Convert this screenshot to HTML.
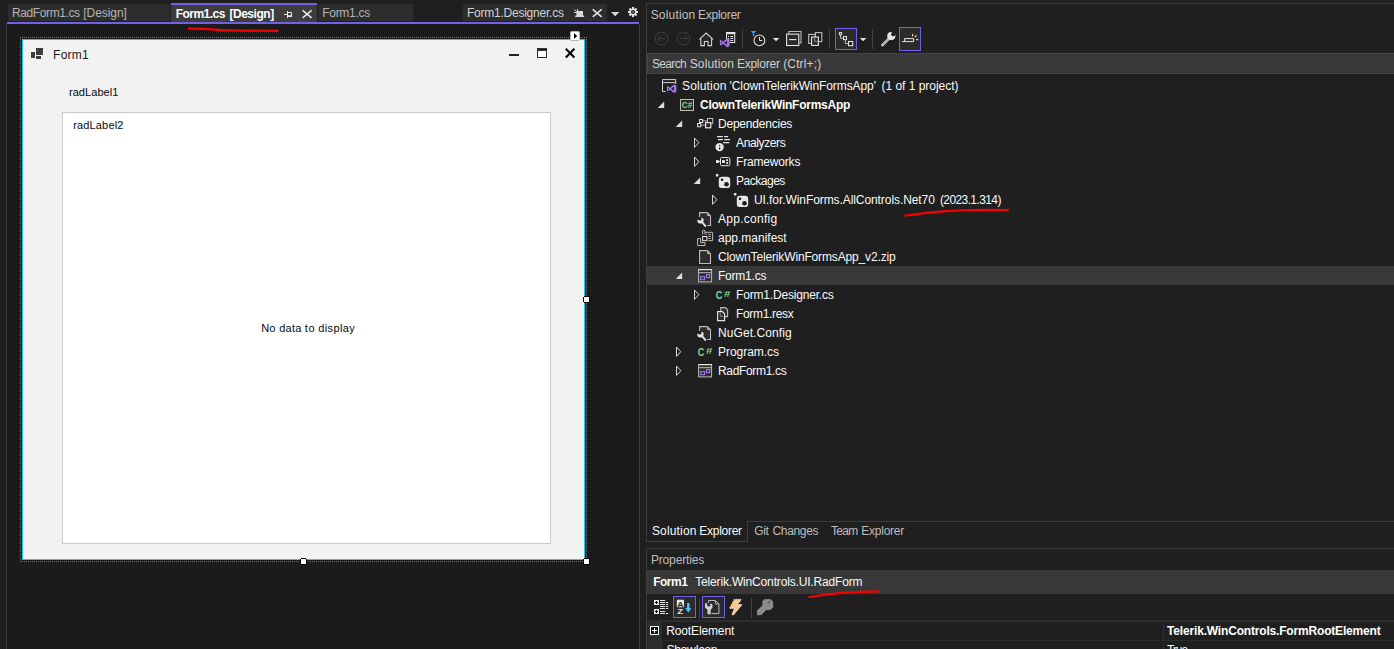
<!DOCTYPE html>
<html lang="en">
<head>
<meta charset="utf-8">
<title>Form1.cs [Design]</title>
<style>
html,body{margin:0;padding:0;}
body{width:1394px;height:649px;overflow:hidden;background:#1f1f1f;position:relative;font-family:"Liberation Sans",sans-serif;font-size:12px;}
.a{position:absolute;display:block;}
.t{position:absolute;display:block;white-space:pre;line-height:16px;height:16px;}
svg{position:absolute;display:block;overflow:visible;}
#left{left:0;top:0;width:640px;height:649px;background:#1f1f1f;}
#surface{left:6px;top:24px;width:634px;height:625px;background:#1b1b1b;border-left:1px solid #3d3d3d;border-right:1px solid #3d3d3d;box-sizing:border-box;}
.tab{top:4px;height:17px;background:#2d2d2d;}
#purple{left:7px;top:22px;width:632px;height:2px;background:#7160e8;}
#form{left:22px;top:39px;width:563px;height:521px;box-sizing:border-box;border:1px solid #10d2ff;background:#f2f2f2;}
#grid{left:62px;top:112px;width:489px;height:432px;box-sizing:border-box;border:1px solid #cacaca;background:#fff;}
.h{width:5px;height:5px;background:#fff;border:1px solid #000;clip-path:polygon(1px 0,6px 0,6px 1px,7px 1px,7px 6px,6px 6px,6px 7px,1px 7px,1px 6px,0 6px,0 1px,1px 1px);}
#gap{left:640px;top:0;width:6px;height:649px;background:#1f1f1f;}
#se{left:646px;top:3px;width:760px;height:519px;box-sizing:border-box;border:1px solid #3d3d3d;background:#1f1f1f;}
#searchbox{left:647px;top:53px;width:760px;height:21px;box-sizing:border-box;border:1px solid #464646;background:#383838;}
#sel{left:647px;top:266px;width:747px;height:19px;background:#383838;}
#pp{left:646px;top:548px;width:760px;height:120px;box-sizing:border-box;border:1px solid #3d3d3d;background:#1f1f1f;}
#objsel{left:647px;top:570px;width:747px;height:24px;background:#383838;}
.sep{width:1px;background:#424242;}
.hl{box-sizing:border-box;border:1px solid #7160e8;background:#1f1f1f;}
</style>
</head>
<body>
<div class="a" id="left"></div>
<div class="a" id="surface"></div>
<div class="a tab" style="left:8px;width:162px;"></div>
<div class="a tab" style="left:171px;width:146px;top:3px;height:19px;background:#3d3d3d;border-top:2px solid #7160e8;box-sizing:border-box;"></div>
<div class="a tab" style="left:318px;width:95px;"></div>
<div class="a tab" style="left:463px;width:144px;"></div>
<div class="a" id="purple"></div>
<!-- designer -->
<div class="a" style="left:20px;top:37px;width:567px;height:525px;box-sizing:border-box;border:1px dotted #727272;"></div>
<div class="a" id="form"></div>
<div class="a" id="grid"></div>
<div class="a h" style="left:583px;top:296px;"></div>
<div class="a h" style="left:300px;top:558px;"></div>
<div class="a h" style="left:583px;top:558px;"></div>
<svg class="a" style="left:0;top:0;" width="646" height="649" viewBox="0 0 646 649">
<!-- active tab pin -->
<g fill="none" stroke="#e8e8e8" stroke-width="1">
<path d="M284 14.5H287.5M287.5 11V18M287.5 12.5H291.5V16.5H287.5"/>
<path d="M288 16H292" stroke-width="1.6"/>
<path d="M302.6 10.3L311.6 17.8M311.6 10.3L302.6 17.8" stroke-width="1.5"/>
</g>
<!-- tab4 preview pin + close -->
<g fill="none" stroke="#d0d0d0" stroke-width="1">
<path d="M592.7 9.3L601.7 16.8M601.7 9.3L592.7 16.8" stroke-width="1.5" stroke="#e0e0e0"/>
<path d="M574.3 9.4L576.2 11.4M577.6 9V11M574 12.4H577" stroke="#d0d0d0"/>
<path d="M576.4 10.9H583V15.6H584.2V17H575.2V15.6H576.4Z" fill="#d8d8d8" stroke="none"/>
</g>
<path d="M611 12H619.4L615.2 16.2Z" fill="#d6d6d6"/>
<!-- gear -->
<g transform="translate(633 12)">
<g stroke="#e4e4e4" stroke-width="2">
<path d="M0 -5V5M-5 0H5M-3.55 -3.55L3.55 3.55M-3.55 3.55L3.55 -3.55"/>
</g>
<circle r="3.5" fill="#e4e4e4"/>
<circle r="2.1" fill="#1f1f1f"/>
<circle r="0.9" fill="#7a7a7a"/>
</g>
<!-- red underline -->
<path d="M188.8 28.7C200 28.6 205 28.8 215 29.6S240 30.8 277.4 30.8" fill="none" stroke="#f80000" stroke-width="2.3" stroke-linecap="round"/>
<!-- smart tag -->
<rect x="570.5" y="31.5" width="9" height="9" rx="1.2" fill="#ffffff" stroke="#b9b4a8" stroke-width="1"/>
<path d="M574 33V39L577.2 36Z" fill="#000"/>
<!-- form icon -->
<g fill="#3d3d3d" stroke="#ffffff" stroke-width="1" paint-order="stroke">
<rect x="36" y="48" width="7" height="7"/>
<rect x="31" y="52" width="4" height="6"/>
<rect x="36" y="56" width="5" height="3"/>
</g>
<!-- window buttons -->
<rect x="509" y="54" width="10" height="2" fill="#222"/>
<rect x="537.5" y="48.5" width="9" height="9" fill="#fff" stroke="#2a2a3a" stroke-width="1"/>
<rect x="537" y="48" width="10" height="3" fill="#2a2a2a"/>
<path d="M565.8 48.8L574.4 57.4M574.4 48.8L565.8 57.4" stroke="#000" stroke-width="2.1" fill="none"/>
</svg>

<!-- right -->
<div class="a" id="gap"></div>
<div class="a" id="se"></div>
<div class="a" id="searchbox"></div>
<div class="a" id="sel"></div>
<!-- bottom tab strip of solution explorer -->
<div class="a" style="left:646px;top:521px;width:748px;height:27px;background:#1f1f1f;"></div>
<div class="a" style="left:747px;top:521px;width:647px;height:1px;background:#3d3d3d;"></div>
<div class="a" style="left:646px;top:521px;width:102px;height:21px;box-sizing:border-box;border:1px solid #3d3d3d;border-top:none;background:#1f1f1f;"></div>
<div class="a" id="pp"></div>
<div class="a" id="objsel"></div>
<!-- property grid -->
<div class="a" style="left:647px;top:620px;width:747px;height:29px;background:#2d2d2d;"></div>
<div class="a" style="left:662px;top:622px;width:501px;height:18px;background:#1f1f1f;"></div>
<div class="a" style="left:1164px;top:622px;width:230px;height:18px;background:#1f1f1f;"></div>
<div class="a" style="left:662px;top:641px;width:501px;height:18px;background:#1f1f1f;"></div>
<div class="a" style="left:1164px;top:641px;width:230px;height:18px;background:#1f1f1f;"></div>
<svg class="a" style="left:646px;top:0;" width="748" height="649" viewBox="646 0 748 649">
<g fill="none" stroke="#3f3f3f" stroke-width="1"><circle cx="661.6" cy="38.5" r="6.4"/><path d="M665.0 38.5H658.2M661.0 35.5L658.0 38.5L661.0 41.5"/></g>
<g fill="none" stroke="#3f3f3f" stroke-width="1"><circle cx="683.5" cy="38.5" r="6.4"/><path d="M680.1 38.5H686.9M684.1 35.5L687.1 38.5L684.1 41.5"/></g>
<path d="M699.4 39.4L706.2 33L713 39.4M700.8 38.6V45.6H704.4V41.4H708V45.6H711.6V38.6" fill="#2b2b2b" stroke="#d4d4d4" stroke-width="1.05"/>
<g><rect x="726.5" y="32.5" width="8.2" height="10" fill="#1f1f1f" stroke="#e6e6e6" stroke-width="1"/><rect x="726" y="32" width="9.2" height="2.2" fill="#e6e6e6"/><path d="M728 36.5H729M730.4 36.5H733.2M728 38.5H729M730.4 38.5H733.2M730.4 40.5H733.2" stroke="#e6e6e6" stroke-width="1" fill="none"/></g>
<rect x="724" y="39" width="5.6" height="8" fill="#1f1f1f"/>
<path transform="translate(719.9 38.2) scale(1.04)" d="M6.9 0L9.3 1V7.6L6.9 8.6L3.1 5.3L1 6.9L0 6.4V2.2L1 1.7L3.1 3.3Z M1.1 3.2V5.4L2.2 4.3Z M4.2 4.3L6.9 6.4V2.2Z" fill="#a575e8" fill-rule="evenodd"/>
<path d="M742.5 29V49" stroke="#424242" stroke-width="1"/>
<path d="M829.5 29V49" stroke="#424242" stroke-width="1"/>
<path d="M872.5 29V49" stroke="#424242" stroke-width="1"/>
<path d="M750.8 31H756.2L754.2 33.3V36.2H752.8V33.3Z" fill="#3b9cff"/>
<g fill="none" stroke="#e6e6e6" stroke-width="1.1"><circle cx="759.4" cy="40.4" r="5.4"/><path d="M759.5 37V40.5H762.3" stroke-width="1"/></g>
<path d="M772.8 37.9H779.3L776.05 41.3Z" fill="#e6e6e6"/>
<path d="M859.9 37.9H866.4L863.15 41.3Z" fill="#e6e6e6"/>
<g fill="none" stroke="#e6e6e6" stroke-width="1.1"><path d="M788.9 33.8V31.5H801V43H799.3" stroke="#bdbdbd"/><rect x="786.6" y="34.1" width="12.2" height="11.4" fill="#2a2a2a"/><path d="M789.2 39.6H796.4"/></g>
<g fill="none" stroke-width="1.1"><rect x="808.7" y="34.4" width="6.6" height="9" stroke="#bdbdbd"/><rect x="815.4" y="32.6" width="6.4" height="9" stroke="#bdbdbd"/><rect x="811.6" y="37" width="6.8" height="8.4" fill="#2a2a2a" stroke="#e6e6e6"/><path d="M814.6 38V41.3H817.6" stroke="#8a8a8a" stroke-width="1"/></g>
<rect x="835.5" y="28.5" width="21" height="21" fill="#2b2b2b" stroke="#7160e8" stroke-width="1"/>
<g fill="none" stroke="#e6e6e6" stroke-width="1"><rect x="839.4" y="32.6" width="2.2" height="2.2"/><rect x="843.5" y="36.6" width="3" height="3"/><rect x="848.5" y="41.5" width="4.2" height="4.2"/><path d="M840.5 35V38.2H843.4M845.3 39.7V43.6H848.4" stroke="#bdbdbd"/></g>
<g><path d="M882.4 45.1L889.4 38.1" stroke="#dcdcdc" stroke-width="2.7" stroke-linecap="round" fill="none"/><path d="M882.6 44.9L888.2 39.3" stroke="#1f1f1f" stroke-width="0.8" stroke-dasharray="0.9 0.5" fill="none"/><circle cx="891.3" cy="36.1" r="4.1" fill="#e6e6e6"/><circle cx="893.2" cy="34.2" r="2.1" fill="#1f1f1f"/><path d="M892.2 32.8L895.9 29.2L898.2 31.5L894.6 35.2Z" fill="#1f1f1f"/></g>
<rect x="899.5" y="27.5" width="21" height="23" fill="#2b2b2b" stroke="#7160e8" stroke-width="1"/>
<g fill="none" stroke="#e6e6e6" stroke-width="1"><path d="M902.3 41.6H913.6V38.6H904.6V41.6"/></g>
<g stroke="#f5d67b" stroke-width="1.2" stroke-linecap="round" fill="none"><path d="M912.6 34.4V35.8M916.2 35.7L915.1 36.9M916.4 39.6H917.9"/></g>
<g fill="none" stroke="#d6d6d6" stroke-width="1"><path d="M665.6 91.5H662.5V79.6H675.7V84"/><path d="M662.5 82.6H675.7"/></g>
<path transform="translate(667 84.4) scale(1.0)" d="M6.9 0L9.3 1V7.6L6.9 8.6L3.1 5.3L1 6.9L0 6.4V2.2L1 1.7L3.1 3.3Z M1.1 3.2V5.4L2.2 4.3Z M4.2 4.3L6.9 6.4V2.2Z" fill="#a575e8" fill-rule="evenodd"/>
<path d="M657.7 108H664.2V101.5Z" fill="#dcdcdc"/>
<rect x="680.5" y="99.5" width="13" height="11" fill="#2a2a2a" stroke="#bdbdbd" stroke-width="1"/>
<text x="681.7" y="108.4" font-family="Liberation Sans, sans-serif" font-weight="700" font-size="9.5" fill="#7fd887" textLength="10.6" lengthAdjust="spacingAndGlyphs">C#</text>
<path d="M675.7 127H682.2V120.5Z" fill="#dcdcdc"/>
<g fill="none" stroke-width="1"><path d="M702.8 120.9H707M701 125.2H705" stroke="#9a9a9a" stroke-width="1.2"/><rect x="707.5" y="118.5" width="5.2" height="5.2" stroke="#bdbdbd"/><rect x="699.6" y="119.5" width="3" height="3" stroke="#e6e6e6"/><rect x="697.6" y="123.5" width="3.2" height="3.2" stroke="#e6e6e6"/><rect x="705.6" y="122.6" width="5.2" height="5.2" fill="#2a2a2a" stroke="#e6e6e6" stroke-width="1.2"/></g>
<path d="M694.5 138V147.4L698.8 142.7Z" fill="none" stroke="#d8d8d8" stroke-width="1"/>
<g stroke="#e6e6e6" stroke-width="1.1" fill="none"><path d="M717 136.6H722.9M724.1 136.6H728.1M718 139.6H722.9M724.1 139.6H730M723.1 142.6H729.2"/></g>
<circle cx="719.6" cy="147.1" r="4.2" fill="#e6e6e6"/>
<path d="M719.6 145.1V145.9M719.6 147.2V149.4" stroke="#111" stroke-width="1.2" fill="none"/>
<path d="M694.5 157V166.4L698.8 161.7Z" fill="none" stroke="#d8d8d8" stroke-width="1"/>
<g fill="none" stroke="#e6e6e6" stroke-width="1"><rect x="720.5" y="157.5" width="9.3" height="8.2" rx="1.2"/><path d="M718.6 161.6H720.6"/></g>
<g fill="#e6e6e6"><rect x="716" y="160.1" width="2.9" height="2.9"/><rect x="722" y="160.1" width="2.9" height="2.9"/><rect x="726.2" y="159.2" width="1.9" height="1.9"/><rect x="726.2" y="162.2" width="1.9" height="1.9"/></g>
<path d="M693.7 184H700.2V177.5Z" fill="#dcdcdc"/>
<rect x="715.9" y="174" width="2.5" height="2.4" rx="0.5" fill="#e6e6e6"/>
<rect x="718.8" y="176.7" width="11.4" height="11.4" rx="3.2" fill="#e6e6e6"/>
<circle cx="722" cy="179.8" r="1.25" fill="#111"/><circle cx="726.5" cy="184.3" r="2.3" fill="#1c1c1c"/>
<path d="M712.5 195V204.4L716.8 199.7Z" fill="none" stroke="#d8d8d8" stroke-width="1"/>
<rect x="733.9" y="193" width="2.5" height="2.4" rx="0.5" fill="#e6e6e6"/>
<rect x="736.8" y="195.7" width="11.4" height="11.4" rx="3.2" fill="#e6e6e6"/>
<circle cx="740" cy="198.8" r="1.25" fill="#111"/><circle cx="744.5" cy="203.3" r="2.3" fill="#1c1c1c"/>
<path d="M700 213H707.3L710.2 216V225H706.5L702 219Z" fill="#2d2d2d"/>
<path d="M699.6 217V212.6H707.4L710.5 215.7V225.5H707.2" fill="none" stroke="#bdbdbd" stroke-width="1.1"/>
<path d="M707.2 213V216H710.2Z" fill="#bdbdbd"/>
<path d="M701.6 221.6L705.3 225.9" stroke="#e6e6e6" stroke-width="2" stroke-linecap="round" fill="none"/>
<path d="M697.6 219.4A3.1 3.1 0 1 0 701.2 217.4L701.6 219.6L700 220.8Z" fill="#e6e6e6"/>
<g fill="none" stroke="#bdbdbd" stroke-width="1"><path d="M702.6 234.5V230.7Q703.8 229.6 705 230.7V232.3H712.6V240.6H708.4"/><path d="M705 232.3V234.5"/><path d="M708.4 234.4H710.8M708.4 236.4H710.8M708.4 238.4H710.8M706.2 234.4H707"/><rect x="702.6" y="236.5" width="4.3" height="4.2" stroke="#e6e6e6"/><path d="M700.6 238.6H697.6V245.5H705V242.6H700.6Z" stroke="#bdbdbd"/></g>
<path d="M699.6 250.6H707.4L710.5 253.7V263.5H699.6Z" fill="#2d2d2d" stroke="#bdbdbd" stroke-width="1.1"/>
<path d="M707.2 251V254H710.2Z" fill="#bdbdbd"/>
<path d="M675.7 279H682.2V272.5Z" fill="#dcdcdc"/>
<g fill="none" stroke-width="1"><rect x="698.6" y="269.6" width="13" height="12.3" stroke="#bdbdbd" fill="#2d2d2d"/><path d="M698.6 272.7H711.6" stroke="#bdbdbd"/><path d="M698.2 269.6H712" stroke="#e6e6e6" stroke-width="1.1"/><rect x="700.7" y="276.7" width="3.9" height="3" stroke="#a575e8" stroke-width="1.1"/><rect x="706.5" y="274.6" width="3.2" height="3" stroke="#a575e8" stroke-width="1.1"/></g>
<path d="M694.5 290V299.4L698.8 294.7Z" fill="none" stroke="#d8d8d8" stroke-width="1"/>
<text x="715.7" y="299.2" font-family="Liberation Sans, sans-serif" font-weight="700" font-size="11.4" fill="#7fd887" textLength="6.6" lengthAdjust="spacingAndGlyphs">C</text>
<text x="723.9" y="297.4" font-family="Liberation Sans, sans-serif" font-weight="700" font-size="9" fill="#7fd887" textLength="6.4" lengthAdjust="spacingAndGlyphs">#</text>
<g fill="#2d2d2d" stroke="#bdbdbd" stroke-width="1.1"><path d="M720.7 307.6H725.4L727.6 309.8V316.6H720.7Z"/><path d="M717.6 311.6H722.4L724.6 313.8V320.6H717.6Z" stroke="#e6e6e6"/><path d="M720.3 313.4V316.3H723.3" stroke="#8a8a8a" stroke-width="1" fill="none"/></g>
<path d="M700 327H707.3L710.2 330V339H706.5L702 333Z" fill="#2d2d2d"/>
<path d="M699.6 331V326.6H707.4L710.5 329.7V339.5H707.2" fill="none" stroke="#bdbdbd" stroke-width="1.1"/>
<path d="M707.2 327V330H710.2Z" fill="#bdbdbd"/>
<path d="M701.6 335.6L705.3 339.9" stroke="#e6e6e6" stroke-width="2" stroke-linecap="round" fill="none"/>
<path d="M697.6 333.4A3.1 3.1 0 1 0 701.2 331.4L701.6 333.6L700 334.8Z" fill="#e6e6e6"/>
<path d="M676.5 347V356.4L680.8 351.7Z" fill="none" stroke="#d8d8d8" stroke-width="1"/>
<text x="697.7" y="356.2" font-family="Liberation Sans, sans-serif" font-weight="700" font-size="11.4" fill="#7fd887" textLength="6.6" lengthAdjust="spacingAndGlyphs">C</text>
<text x="705.9" y="354.4" font-family="Liberation Sans, sans-serif" font-weight="700" font-size="9" fill="#7fd887" textLength="6.4" lengthAdjust="spacingAndGlyphs">#</text>
<path d="M676.5 366V375.4L680.8 370.7Z" fill="none" stroke="#d8d8d8" stroke-width="1"/>
<g fill="none" stroke-width="1"><rect x="698.6" y="364.6" width="13" height="12.3" stroke="#bdbdbd" fill="#2d2d2d"/><path d="M698.6 367.7H711.6" stroke="#bdbdbd"/><path d="M698.2 364.6H712" stroke="#e6e6e6" stroke-width="1.1"/><rect x="700.7" y="371.7" width="3.9" height="3" stroke="#a575e8" stroke-width="1.1"/><rect x="706.5" y="369.6" width="3.2" height="3" stroke="#a575e8" stroke-width="1.1"/></g>
<path d="M905.5 215.6C930 212 955 209.3 1008 210" fill="none" stroke="#f80000" stroke-width="2.2" stroke-linecap="round"/>
<path d="M809.5 597C830 593.5 850 591.5 878 591.4" fill="none" stroke="#f80000" stroke-width="2.2" stroke-linecap="round"/>
<g><rect x="654" y="600" width="5" height="5" fill="#e6e6e6"/><rect x="654" y="609" width="5" height="5" fill="#e6e6e6"/><path d="M655 602.5H658M656.5 601V604M655 611.5H658M656.5 610V613" stroke="#111" stroke-width="1" fill="none"/><path d="M660 600.5H665.2M660 602.5H665.2M660 604.5H665.2M660 606.5H665.2M660 608.5H665.2M660 611.5H665.2M660 613.5H665.2M666 602.5H668.2M666 604.5H668.2M666 606.5H668.2M666 608.5H668.2M666 613.5H668.2" stroke="#e6e6e6" stroke-width="1.1" fill="none"/></g>
<rect x="673.5" y="596.5" width="22" height="21" fill="#2b2b2b" stroke="#7160e8" stroke-width="1"/>
<rect x="676.8" y="599.8" width="7.2" height="7.4" fill="#e6e6e6" rx="0.6"/>
<text x="677.3" y="606.6" font-family="Liberation Sans, sans-serif" font-weight="700" font-size="8" fill="#222" textLength="6.2" lengthAdjust="spacingAndGlyphs">A</text>
<text x="677.3" y="614.4" font-family="Liberation Sans, sans-serif" font-weight="700" font-size="8" fill="#e6e6e6" textLength="5.8" lengthAdjust="spacingAndGlyphs">Z</text>
<path d="M687.1 603H689.5V608H691.4L688.3 612.5L685.1 608H687.1Z" fill="#4cc2ff"/>
<path d="M699.5 598V618" stroke="#424242" stroke-width="1"/>
<path d="M751.5 598V618" stroke="#424242" stroke-width="1"/>
<rect x="702.5" y="596.5" width="22" height="21" fill="#2b2b2b" stroke="#7160e8" stroke-width="1"/>
<g fill="none" stroke="#bdbdbd" stroke-width="1"><path d="M708.6 603V600.5H715.5L718.9 603.9V613.6H711.5"/><path d="M715.3 601V604H718.5"/></g>
<path d="M705.1 603.3L707.2 603.3L707.2 606.2L710.2 606.2L710.2 603.5L712.3 604.3L712.6 607.4L710.7 609.8L710.7 614.2L707.5 614.2L707.5 609.8L704.9 607.4Z" fill="#d2d2d2"/>
<path d="M734.3 599.4L741.3 599.4L737.7 604.6L742.2 604.6L733.3 615.2L731.9 614.6L734.3 608.4L729.5 608.4Z" fill="#f9c98f" stroke="#ffffff" stroke-width="0.9" stroke-dasharray="1 0.8"/>
<path d="M757.3 614.8V610.6L762.7 605.8V601.5L764.6 599.4H770.6L772.8 601.7V607.3L770.2 609.7H766L761.2 614.8Z" fill="#8c8c8c" stroke="#b5b5b5" stroke-width="0.8" stroke-dasharray="0.8 0.6"/>
<path d="M767.7 603.4L770.3 600.9" stroke="#6a6a6a" stroke-width="2" fill="none"/>
<rect x="650.5" y="626.5" width="8" height="8" fill="#101010" stroke="#f4f4f4" stroke-width="1"/><path d="M652 630.5H657M654.5 628V633" stroke="#ffffff" stroke-width="1" fill="none"/>
</svg>
<span id="tab1"><span class="t" id="tab1_0" style="left:11.95px;top:5.04px;font-size:12px;color:#b4b4b4;letter-spacing:-0.385px;">RadForm1.cs </span><span class="t" id="tab1_1" style="left:83.35px;top:5.04px;font-size:12px;color:#b4b4b4;letter-spacing:-0.072px;">[Design]</span></span>
<span id="tab2"><span class="t" id="tab2_0" style="left:175.71px;top:5.94px;font-size:12px;color:#ffffff;font-weight:700;letter-spacing:-0.527px;">Form1.cs </span><span class="t" id="tab2_1" style="left:229.41px;top:5.94px;font-size:12px;color:#ffffff;font-weight:700;letter-spacing:-0.463px;">[Design]</span></span><span class="t" id="tab3" style="left:322.20px;top:5.04px;font-size:12px;color:#b4b4b4;letter-spacing:-0.271px;">Form1.cs</span><span class="t" id="tab4" style="left:466.90px;top:5.04px;font-size:12px;color:#d2d2d2;letter-spacing:-0.229px;">Form1.Designer.cs</span><span class="t" id="formtitle" style="left:53.10px;top:47.04px;font-size:12px;color:#1a1a1a;letter-spacing:0.220px;">Form1</span><span class="t" id="lbl1" style="left:68.94px;top:84.49px;font-size:11px;color:#0a0a14;letter-spacing:0.068px;">radLabel1</span><span class="t" id="lbl2" style="left:73.14px;top:117.49px;font-size:11px;color:#0a0a14;letter-spacing:0.169px;">radLabel2</span>
<span id="nodata"><span class="t" id="nodata_0" style="left:261.33px;top:320.49px;font-size:11px;color:#0a0a14;letter-spacing:-0.074px;">No </span><span class="t" id="nodata_1" style="left:279.17px;top:320.49px;font-size:11px;color:#0a0a14;letter-spacing:0.242px;">data </span><span class="t" id="nodata_2" style="left:304.83px;top:320.49px;font-size:11px;color:#0a0a14;letter-spacing:0.617px;">to </span><span class="t" id="nodata_3" style="left:318.27px;top:320.49px;font-size:11px;color:#0a0a14;letter-spacing:0.360px;">display</span></span>
<span id="setitle"><span class="t" id="setitle_0" style="left:650.68px;top:7.04px;font-size:12px;color:#c0c0c0;letter-spacing:0.173px;">Solution </span><span class="t" id="setitle_1" style="left:698.10px;top:7.04px;font-size:12px;color:#c0c0c0;letter-spacing:-0.276px;">Explorer</span></span>
<span id="search"><span class="t" id="search_0" style="left:651.98px;top:55.84px;font-size:12px;color:#d0d0d0;letter-spacing:-0.667px;">Search </span><span class="t" id="search_1" style="left:689.68px;top:55.84px;font-size:12px;color:#d0d0d0;letter-spacing:0.144px;">Solution </span><span class="t" id="search_2" style="left:736.90px;top:55.84px;font-size:12px;color:#d0d0d0;letter-spacing:-0.234px;">Explorer </span><span class="t" id="search_3" style="left:783.21px;top:55.84px;font-size:12px;color:#d0d0d0;letter-spacing:0.139px;">(Ctrl+;)</span></span>
<span id="row0"><span class="t" id="row0_0" style="left:682.00px;top:78.04px;font-size:12px;color:#fafafa;letter-spacing:0.144px;">Solution </span><span class="t" id="row0_1" style="left:729.54px;top:78.04px;font-size:12px;color:#fafafa;letter-spacing:-0.093px;">'ClownTelerikWinFormsApp' </span><span class="t" id="row0_2" style="left:881.51px;top:78.04px;font-size:12px;color:#fafafa;letter-spacing:-0.025px;">(1 of 1 project)</span></span><span class="t" id="row1" style="left:700.00px;top:97.04px;font-size:12px;color:#ffffff;font-weight:700;letter-spacing:-0.240px;">ClownTelerikWinFormsApp</span><span class="t" id="row2" style="left:718.00px;top:116.04px;font-size:12px;color:#fafafa;letter-spacing:-0.214px;">Dependencies</span><span class="t" id="row3" style="left:736.00px;top:135.04px;font-size:12px;color:#fafafa;letter-spacing:-0.373px;">Analyzers</span><span class="t" id="row4" style="left:736.00px;top:154.04px;font-size:12px;color:#fafafa;letter-spacing:-0.178px;">Frameworks</span><span class="t" id="row5" style="left:736.00px;top:173.04px;font-size:12px;color:#fafafa;letter-spacing:-0.480px;">Packages</span>
<span id="row6"><span class="t" id="row6_0" style="left:754.00px;top:192.04px;font-size:12px;color:#fafafa;letter-spacing:-0.079px;">UI.for.WinForms.AllControls.Net70 </span><span class="t" id="row6_1" style="left:939.91px;top:192.04px;font-size:12px;color:#fafafa;letter-spacing:-0.594px;">(2023.1.314)</span></span><span class="t" id="row7" style="left:718.00px;top:211.04px;font-size:12px;color:#fafafa;letter-spacing:0.277px;">App.config</span><span class="t" id="row8" style="left:718.00px;top:230.04px;font-size:12px;color:#fafafa;letter-spacing:-0.004px;">app.manifest</span><span class="t" id="row9" style="left:718.00px;top:249.04px;font-size:12px;color:#fafafa;letter-spacing:-0.151px;">ClownTelerikWinFormsApp_v2.zip</span><span class="t" id="row10" style="left:718.00px;top:268.04px;font-size:12px;color:#fafafa;letter-spacing:-0.229px;">Form1.cs</span><span class="t" id="row11" style="left:736.00px;top:287.04px;font-size:12px;color:#fafafa;letter-spacing:-0.179px;">Form1.Designer.cs</span><span class="t" id="row12" style="left:736.00px;top:306.04px;font-size:12px;color:#fafafa;letter-spacing:-0.323px;">Form1.resx</span><span class="t" id="row13" style="left:718.00px;top:325.04px;font-size:12px;color:#fafafa;letter-spacing:0.084px;">NuGet.Config</span><span class="t" id="row14" style="left:718.00px;top:344.04px;font-size:12px;color:#fafafa;letter-spacing:-0.029px;">Program.cs</span><span class="t" id="row15" style="left:718.00px;top:363.04px;font-size:12px;color:#fafafa;letter-spacing:-0.330px;">RadForm1.cs</span>
<span id="btab1"><span class="t" id="btab1_0" style="left:651.88px;top:523.04px;font-size:12px;color:#fafafa;letter-spacing:0.173px;">Solution </span><span class="t" id="btab1_1" style="left:699.30px;top:523.04px;font-size:12px;color:#fafafa;letter-spacing:-0.276px;">Explorer</span></span>
<span id="btab2"><span class="t" id="btab2_0" style="left:754.14px;top:523.04px;font-size:12px;color:#bdbdbd;letter-spacing:-0.313px;">Git </span><span class="t" id="btab2_1" style="left:772.46px;top:523.04px;font-size:12px;color:#bdbdbd;letter-spacing:-0.327px;">Changes</span></span>
<span id="btab3"><span class="t" id="btab3_0" style="left:831.00px;top:523.04px;font-size:12px;color:#bdbdbd;letter-spacing:-0.690px;">Team </span><span class="t" id="btab3_1" style="left:861.30px;top:523.04px;font-size:12px;color:#bdbdbd;letter-spacing:-0.248px;">Explorer</span></span><span class="t" id="proptitle" style="left:650.90px;top:552.04px;font-size:12px;color:#bdbdbd;letter-spacing:-0.151px;">Properties</span><span class="t" id="objname" style="left:653.21px;top:574.04px;font-size:12px;color:#ffffff;font-weight:700;letter-spacing:-0.516px;">Form1</span><span class="t" id="objtype" style="left:695.20px;top:574.04px;font-size:12px;color:#fafafa;letter-spacing:-0.160px;">Telerik.WinControls.UI.RadForm</span><span class="t" id="prop1" style="left:666.20px;top:623.04px;font-size:12px;color:#fafafa;letter-spacing:-0.129px;">RootElement</span><span class="t" id="val1" style="left:1167.10px;top:623.04px;font-size:12px;color:#ffffff;font-weight:700;letter-spacing:-0.178px;">Telerik.WinControls.FormRootElement</span><span class="t" id="prop2" style="left:666.48px;top:642.04px;font-size:12px;color:#fafafa;letter-spacing:-0.266px;">ShowIcon</span><span class="t" id="val2" style="left:1167.00px;top:642.04px;font-size:12px;color:#fafafa;letter-spacing:-1.003px;">True</span>
</body>
</html>
